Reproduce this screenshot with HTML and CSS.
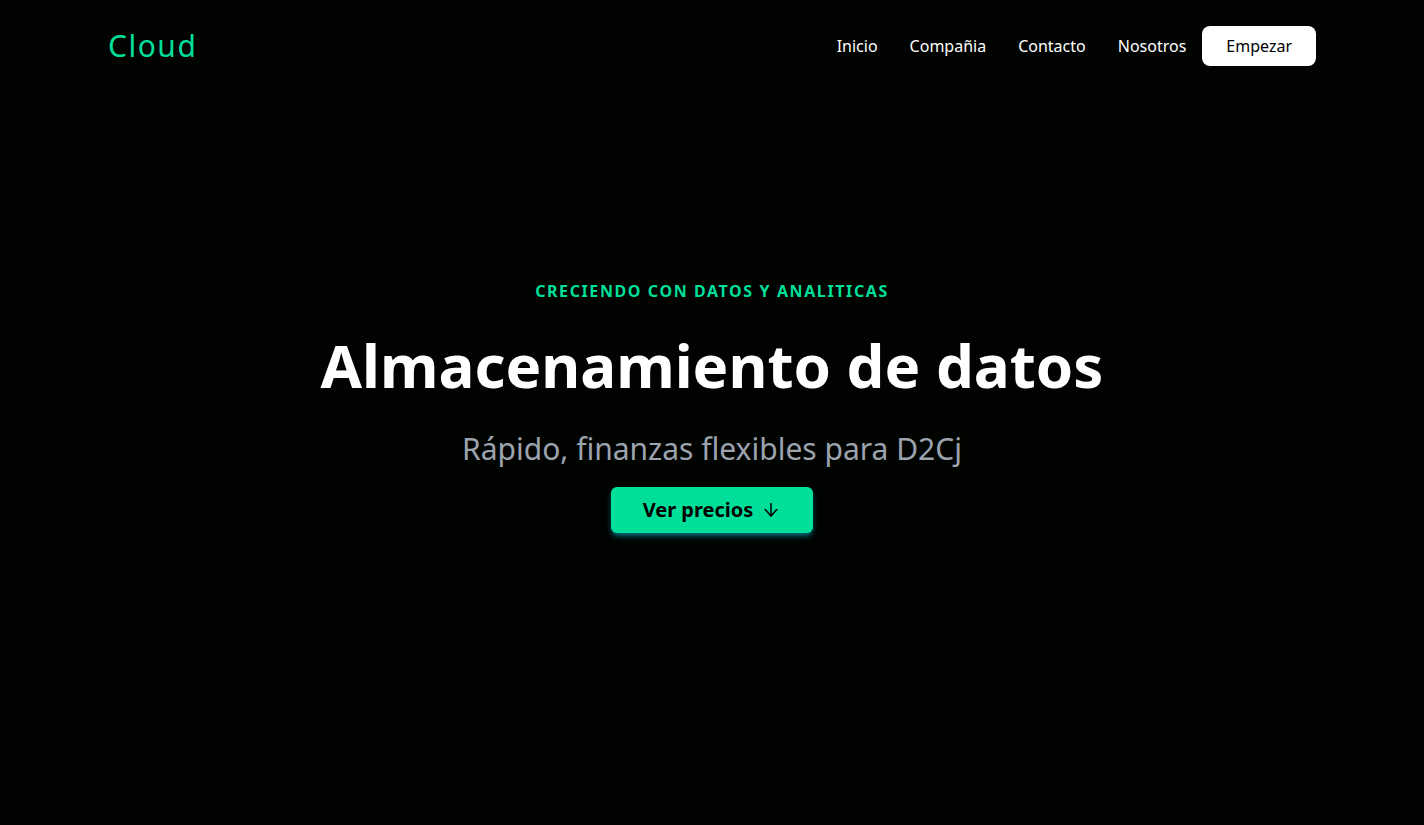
FILE: index.html
```html
<!DOCTYPE html>
<html lang="es">
<head>
<meta charset="utf-8">
<meta name="viewport" content="width=device-width, initial-scale=1">
<title>Cloud</title>
<link rel="stylesheet" href="styles.css">
</head>
<body>
<header class="navbar">
  <a class="logo" href="#">Cloud</a>
  <nav class="menu">
    <a class="menu-link" href="#">Inicio</a>
    <a class="menu-link" href="#">Compañia</a>
    <a class="menu-link" href="#">Contacto</a>
    <a class="menu-link" href="#">Nosotros</a>
    <button class="start" type="button">Empezar</button>
  </nav>
</header>
<main class="hero">
  <p class="eyebrow">Creciendo con datos y analiticas</p>
  <h1 class="title">Almacenamiento de datos</h1>
  <p class="subtitle">Rápido, finanzas flexibles para D2Cj</p>
  <button class="prices" type="button">Ver precios
    <svg class="arrow" viewBox="0 0 1024 1024" fill="currentColor" aria-hidden="true"><path d="M862 465.3h-81c-4.6 0-9 2-12.1 5.500L550 723.100V160c0-4.400-3.600-8-8-8h-60c-4.400 0-8 3.600-8 8v563.100L255.100 470.800c-3-3.500-7.400-5.500-12.100-5.500h-81c-6.800 0-10.500 8.100-6 13.200L487.900 861a31.960 31.960 0 0 0 48.300 0L868 478.500c4.500-5.200.8-13.200-6-13.200z"/></svg>
  </button>
</main>
</body>
</html>
```

FILE: styles.css
```css
* {
  box-sizing: border-box;
}

body {
  margin: 0;
  min-height: 100vh;
  display: flex;
  flex-direction: column;
  background: #000300;
  color: #fff;
  font-family: "Noto Sans", sans-serif;
  font-size: 16px;
  line-height: 24px;
}

.navbar {
  display: flex;
  align-items: center;
  justify-content: space-between;
  width: 100%;
  max-width: 1240px;
  height: 92px;
  margin: 0 auto;
  padding: 0 16px;
}

.logo {
  color: #00df9a;
  font-size: 30px;
  line-height: 36px;
  letter-spacing: 0.05em;
  text-decoration: none;
}

.menu {
  display: flex;
  align-items: center;
}

.menu-link {
  padding: 16px;
  color: inherit;
  text-decoration: none;
}

.start {
  padding: 8px 24px;
  border: 0;
  border-radius: 8px;
  background: #fff;
  color: #000;
  font: inherit;
}

.hero {
  flex: 1;
  display: flex;
  flex-direction: column;
  align-items: center;
  justify-content: center;
  padding-bottom: 114px;
  text-align: center;
}

.eyebrow {
  margin: 0;
  padding: 8px;
  color: #00df9a;
  font-weight: 700;
  letter-spacing: 0.1em;
  text-transform: uppercase;
}

.title {
  margin: 0;
  padding: 24px 0 36px;
  font-size: 60px;
  line-height: 60px;
  font-weight: 700;
}

.subtitle {
  margin: 0;
  padding-bottom: 20px;
  color: #9ca3af;
  font-size: 30px;
  line-height: 36px;
}

.prices {
  display: flex;
  align-items: center;
  gap: 8px;
  padding: 9px 32px;
  border: 0;
  border-radius: 6px;
  background: #00df9a;
  box-shadow: 0 4px 6px -1px rgba(6, 182, 212, 0.5), 0 2px 4px -2px rgba(6, 182, 212, 0.5);
  color: #000;
  font: inherit;
  font-size: 20px;
  line-height: 28px;
  font-weight: 700;
}

.arrow {
  width: 20px;
  height: 20px;
}
```
